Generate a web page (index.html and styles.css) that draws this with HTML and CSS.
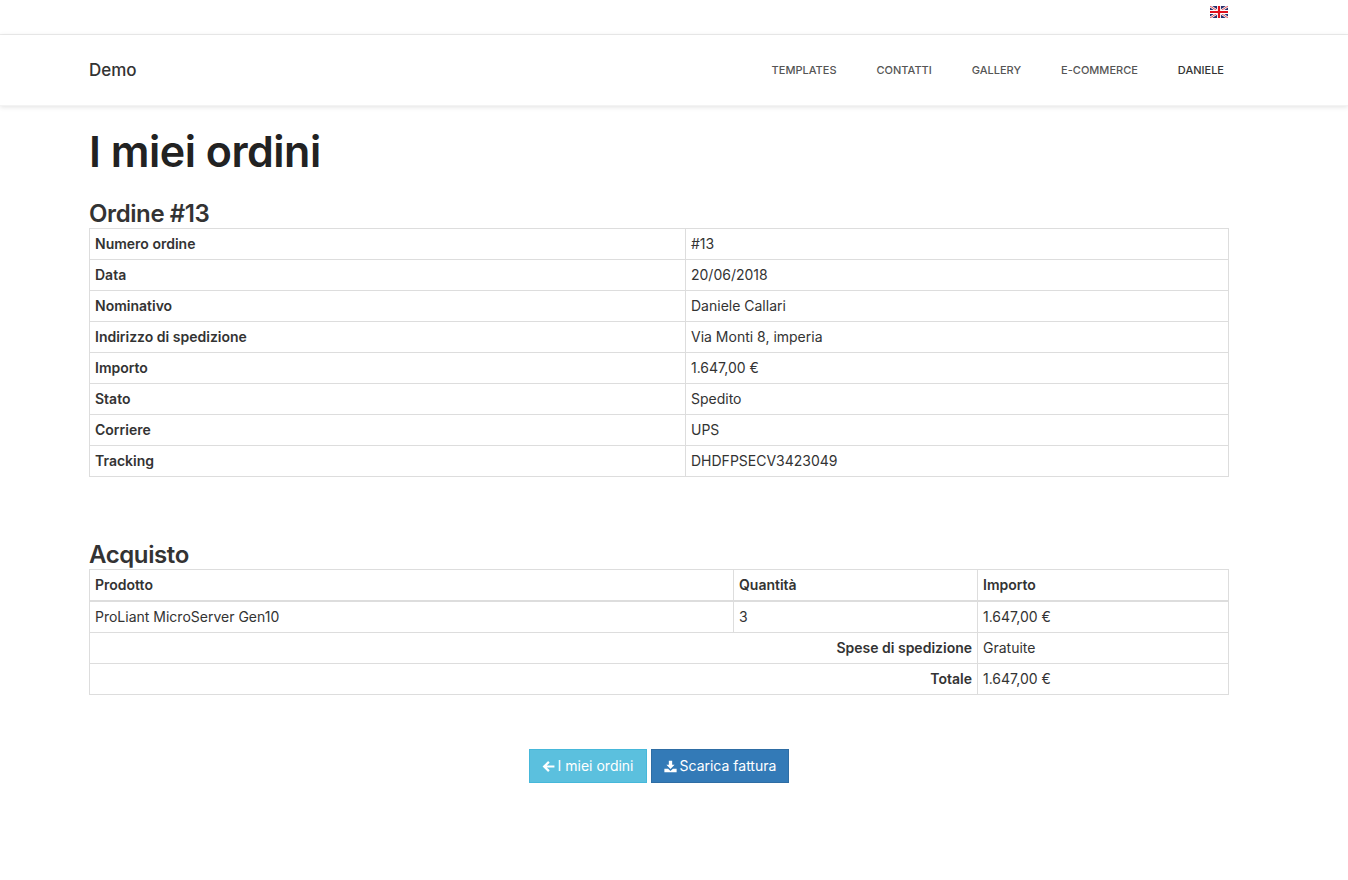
FILE: index.html
```html
<!DOCTYPE html>
<html lang="it">
<head>
  <meta charset="UTF-8" />
  <title>I miei ordini</title>
  <link rel="stylesheet" href="styles.css">
</head>
<body>
  <div class="topbar">
    <div class="wrap topbar-inner">
      <svg class="flag" viewBox="0 0 18 12" width="18" height="12">
        <rect width="18" height="12" fill="#27306e"/>
        <path d="M0 0L18 12M18 0L0 12" stroke="#fff" stroke-width="2.4"/>
        <path d="M0 0L18 12M18 0L0 12" stroke="#d8202c" stroke-width="0.8"/>
        <path d="M9 0V12M0 6H18" stroke="#fff" stroke-width="4"/>
        <path d="M9 0V12M0 6H18" stroke="#e0101c" stroke-width="2.2"/>
      </svg>
    </div>
  </div>
  <nav class="navbar">
    <div class="wrap navbar-inner">
      <a class="brand">Demo</a>
      <ul class="menu">
        <li>TEMPLATES</li>
        <li>CONTATTI</li>
        <li>GALLERY</li>
        <li>E-COMMERCE</li>
        <li class="menu-user">DANIELE</li>
      </ul>
    </div>
  </nav>
  <main class="wrap">
    <h1 class="page-title">I miei ordini</h1>

    <h3 class="section-title">Ordine #13</h3>
    <table class="grid details">
      <tr><th>Numero ordine</th><td>#13</td></tr>
      <tr><th>Data</th><td>20/06/2018</td></tr>
      <tr><th>Nominativo</th><td>Daniele Callari</td></tr>
      <tr><th>Indirizzo di spedizione</th><td>Via Monti 8, imperia</td></tr>
      <tr><th>Importo</th><td>1.647,00 €</td></tr>
      <tr><th>Stato</th><td>Spedito</td></tr>
      <tr><th>Corriere</th><td>UPS</td></tr>
      <tr><th>Tracking</th><td>DHDFPSECV3423049</td></tr>
    </table>

    <h3 class="section-title section-gap">Acquisto</h3>
    <table class="grid purchase">
      <thead>
        <tr><th class="col-product">Prodotto</th><th class="col-qty">Quantità</th><th>Importo</th></tr>
      </thead>
      <tbody>
        <tr><td>ProLiant MicroServer Gen10</td><td>3</td><td>1.647,00 €</td></tr>
        <tr><th colspan="2" class="right">Spese di spedizione</th><td>Gratuite</td></tr>
        <tr><th colspan="2" class="right">Totale</th><td>1.647,00 €</td></tr>
      </tbody>
    </table>

    <div class="actions">
      <a class="btn btn-info">
        <svg class="icon" viewBox="0 0 14 14" width="13" height="13"><path d="M0.6 7L6.6 1.2L8.3 2.9L5.1 5.9H13.4V8.1H5.1L8.3 11.1L6.6 12.8Z" fill="currentColor"/></svg>
        I miei ordini</a>
      <a class="btn btn-primary">
        <svg class="icon" viewBox="0 0 14 14" width="13" height="13"><path d="M5.2 0.8H8.8V5.2H11.4L7 9.6L2.6 5.2H5.2ZM0.4 9.4H4.4L7 11.8L9.6 9.4H13.6V13.2H0.4Z" fill="currentColor"/></svg>
        Scarica fattura</a>
    </div>
  </main>
</body>
</html>
```

FILE: styles.css
```css
html, body {
  margin: 0;
  padding: 0;
}
body {
  background: #fff;
  color: #333;
  font-family: Inter, "Liberation Sans", sans-serif;
  font-size: 14px;
  line-height: 20px;
}
.wrap {
  width: 1140px;
  margin: 0 auto;
  padding-right: 30px;
}
.topbar {
  height: 34px;
  border-bottom: 1px solid #eee;
}
.topbar-inner {
  display: flex;
  justify-content: flex-end;
  align-items: flex-start;
}
.flag {
  display: block;
  margin: 6px 1px 0 0;
}
.navbar {
  height: 70px;
  box-shadow: 0 1px 5px rgba(0, 0, 0, 0.12);
  border-bottom: 1px solid #f3f3f3;
  box-sizing: content-box;
}
.navbar-inner {
  display: flex;
  justify-content: space-between;
  align-items: center;
  height: 70px;
}
.brand {
  font-size: 17px;
  font-weight: 500;
  color: #333;
}
.menu {
  display: flex;
  gap: 40px;
  list-style: none;
  margin: 0 5px 0 0;
  padding: 0;
  font-size: 11px;
  font-weight: 500;
  color: #555;
}
.menu-user {
  color: #333;
}
.page-title {
  margin: 20px 0 24px;
  font-size: 43px;
  line-height: 50px;
  font-weight: 600;
  color: #222;
  letter-spacing: -0.5px;
}
.section-title {
  margin: 0;
  font-size: 24px;
  line-height: 28px;
  font-weight: 600;
  color: #333;
  letter-spacing: -0.4px;
}
.section-gap {
  margin-top: 64px;
}
.grid {
  width: 100%;
  border-collapse: collapse;
  table-layout: fixed;
}
.grid th, .grid td {
  border: 1px solid #ddd;
  padding: 5px;
  text-align: left;
  font-size: 14px;
  line-height: 20px;
}
.grid th {
  font-weight: 600;
}
.grid td {
  font-weight: 400;
}
.grid thead th {
  border-bottom-width: 2px;
}
.grid .right {
  text-align: right;
}
.details th {
  width: 596px;
  box-sizing: border-box;
}
.col-product {
  width: 644px;
  box-sizing: border-box;
}
.col-qty {
  width: 244px;
  box-sizing: border-box;
}
.actions {
  margin-top: 54px;
  display: flex;
  justify-content: center;
  gap: 4px;
}
.btn {
  display: flex;
  align-items: center;
  gap: 3px;
  height: 34px;
  box-sizing: border-box;
  padding: 6px 12px;
  border: 1px solid;
  color: #fff;
}
.btn-info {
  background: #5bc0de;
  border-color: #46b8da;
}
.btn-primary {
  background: #337ab7;
  border-color: #2e6da4;
}
.icon {
  display: block;
}
```
